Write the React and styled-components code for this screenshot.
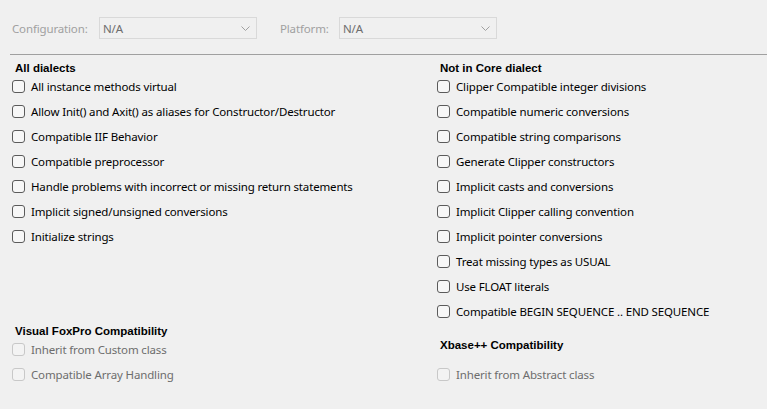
import styled, { createGlobalStyle } from "styled-components";

const GlobalStyle = createGlobalStyle`
  html, body {
    margin: 0;
    padding: 0;
    background: #f0f0f0;
  }
`;

const Page = styled.div`
  width: 767px;
  height: 409px;
  background: #f0f0f0;
  font-family: "Noto Sans", "Open Sans", sans-serif;
  font-size: 11.5px;
  letter-spacing: -0.15px;
  color: #000;
  overflow: hidden;
`;

const Toolbar = styled.div`
  display: flex;
  align-items: center;
  height: 22px;
  padding: 17px 0 0 12px;
`;

const FieldLabel = styled.span`
  color: #a0a0a0;
  width: ${(p) => p.$width}px;
`;

const Combo = styled.div`
  box-sizing: border-box;
  width: 158px;
  height: 22px;
  border: 1px solid #d9d9d9;
  background: #f0f0f0;
  display: flex;
  align-items: center;
  justify-content: space-between;
  padding: 0 6px 0 3px;
  color: #6d6d6d;
  margin-right: 23px;
`;

const Separator = styled.div`
  height: 1px;
  background: #a0a0a0;
  margin: 15px 0 0 10px;
`;

const Body = styled.div`
  display: grid;
  grid-template-columns: 425px 1fr;
  padding: 6px 0 0 12px;
`;

const Column = styled.div`
  display: flex;
  flex-direction: column;
`;

const Group = styled.div`
  display: flex;
  flex-direction: column;
  margin-top: ${(p) => p.$top || 0}px;
`;

const Heading = styled.div`
  font-family: "Liberation Sans", Arial, sans-serif;
  font-weight: bold;
  font-size: 11.5px;
  letter-spacing: 0;
  line-height: 14px;
  height: 13px;
  padding-left: 3px;
  margin-bottom: ${(p) => p.$after || 0}px;
`;

const Row = styled.label`
  display: flex;
  align-items: center;
  height: 25px;
  color: ${(p) => (p.$disabled ? "#6d6d6d" : "#000")};
`;

const Box = styled.span`
  box-sizing: border-box;
  width: 13px;
  height: 13px;
  border-radius: 3px;
  border: 1px solid ${(p) => (p.$disabled ? "#c8c8c8" : "#5b5b5b")};
  background: ${(p) => (p.$disabled ? "#f3f3f3" : "#f7f7f7")};
  margin-right: 6px;
  flex-shrink: 0;
`;

function Chevron() {
  return (
    <svg width="9" height="5" viewBox="0 0 9 5">
      <path d="M0.5 0.5 L4.5 4.5 L8.5 0.5" fill="none" stroke="#a0a0a0" strokeWidth="1" />
    </svg>
  );
}

function Option({ label, disabled }) {
  return (
    <Row $disabled={disabled}>
      <Box $disabled={disabled} />
      {label}
    </Row>
  );
}

const allDialects = [
  "All instance methods virtual",
  "Allow Init() and Axit() as aliases for Constructor/Destructor",
  "Compatible IIF Behavior",
  "Compatible preprocessor",
  "Handle problems with incorrect or missing return statements",
  "Implicit signed/unsigned conversions",
  "Initialize strings",
];

const notCore = [
  "Clipper Compatible integer divisions",
  "Compatible numeric conversions",
  "Compatible string comparisons",
  "Generate Clipper constructors",
  "Implicit casts and conversions",
  "Implicit Clipper calling convention",
  "Implicit pointer conversions",
  "Treat missing types as USUAL",
  "Use FLOAT literals",
  "Compatible BEGIN SEQUENCE .. END SEQUENCE",
];

export default function App() {
  return (
    <Page>
      <GlobalStyle />
      <Toolbar>
        <FieldLabel $width={87}>Configuration:</FieldLabel>
        <Combo>
          N/A
          <Chevron />
        </Combo>
        <FieldLabel $width={59}>Platform:</FieldLabel>
        <Combo>
          N/A
          <Chevron />
        </Combo>
      </Toolbar>
      <Separator />
      <Body>
        <Column>
          <Group>
            <Heading>All dialects</Heading>
            {allDialects.map((t) => (
              <Option key={t} label={t} />
            ))}
          </Group>
          <Group $top={75}>
            <Heading>Visual FoxPro Compatibility</Heading>
            <Option label="Inherit from Custom class" disabled />
            <Option label="Compatible Array Handling" disabled />
          </Group>
        </Column>
        <Column>
          <Group>
            <Heading>Not in Core dialect</Heading>
            {notCore.map((t) => (
              <Option key={t} label={t} />
            ))}
          </Group>
          <Group $top={14}>
            <Heading $after={11}>Xbase++ Compatibility</Heading>
            <Option label="Inherit from Abstract class" disabled />
          </Group>
        </Column>
      </Body>
    </Page>
  );
}
